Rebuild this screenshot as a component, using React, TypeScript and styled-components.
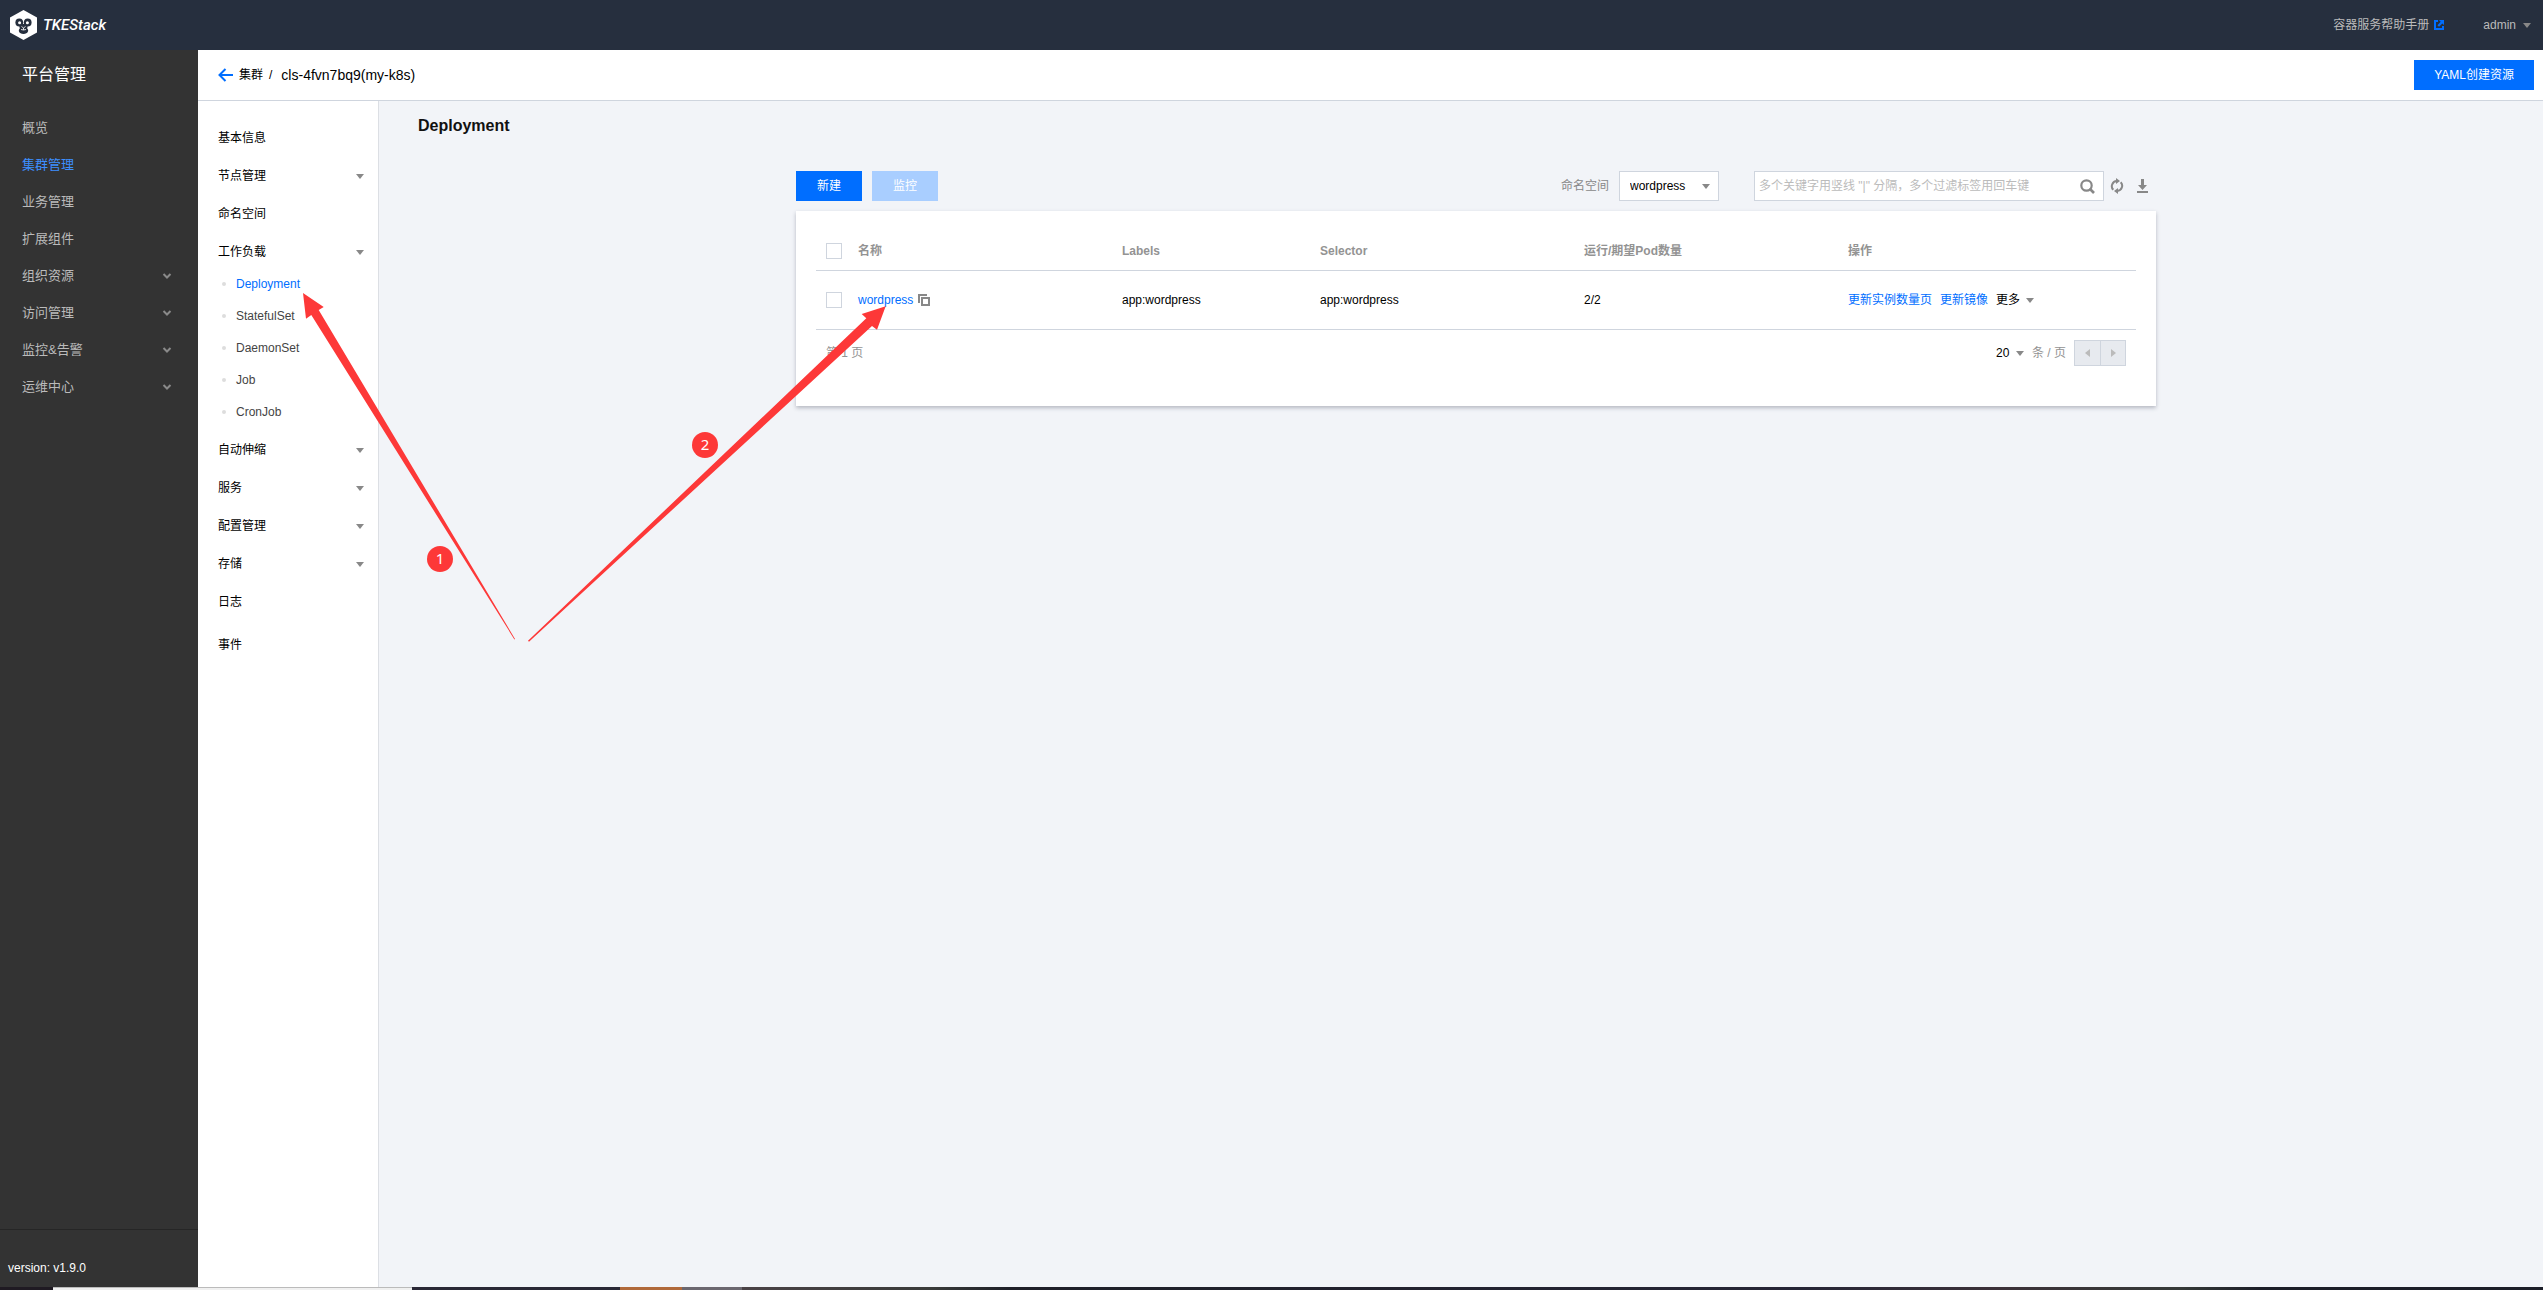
import React from 'react';
import styled, { createGlobalStyle } from 'styled-components';

const blue = '#006eff';
const line = '#cfd5de';
const muted = '#888';
const label = '#939393';

const GlobalStyle = createGlobalStyle`
  *, *::before, *::after { box-sizing: border-box; }
  body {
    margin: 0;
    color: #000;
    background: #f2f4f8;
    font-family: "Liberation Sans", "Noto Sans CJK SC", sans-serif;
    font-size: 12px;
    line-height: 18px;
  }
  button, input, select { font: inherit; color: inherit; border: 0; border-radius: 0; padding: 0; margin: 0; background: none; }
  button { cursor: pointer; }
  a { color: inherit; text-decoration: none; }
  ul { list-style: none; margin: 0; padding: 0; }
  h1, h2 { margin: 0; }
  svg { display: block; flex: none; }
`;

const Page = styled.div`
  position: relative;
  display: grid;
  grid-template-rows: 50px 1fr 3px;
  min-height: 100vh;
`;

const TopBar = styled.header`
  display: flex;
  align-items: center;
  justify-content: space-between;
  padding: 0 12px 0 10px;
  background: #262f3e;
  color: #bbb;
`;

const Brand = styled.a`
  display: flex;
  align-items: center;
  gap: 6px;
  color: #fff;
  font-family: Roboto, sans-serif;
  font-size: 15px;
  font-style: italic;
  font-weight: 500;
`;

const TopLinks = styled.nav`
  display: flex;
  align-items: center;
  gap: 39px;
`;

const TopLink = styled.a`
  display: flex;
  align-items: center;
  gap: 5px;
`;

const UserButton = styled.button`
  display: flex;
  align-items: center;
  gap: 7px;
`;

const Body = styled.div`
  display: grid;
  grid-template-columns: 198px 1fr;
`;

const Sidebar = styled.aside`
  display: flex;
  flex-direction: column;
  background: #333;
  color: #bbb;
`;

const SideTitle = styled.h2`
  padding: 13px 22px 22px;
  font-size: 16px;
  line-height: 24px;
  font-weight: 400;
  color: #fff;
`;

const SideList = styled.ul`
  flex: 1;
`;

const SideLink = styled.a<{ $active?: boolean }>`
  display: flex;
  align-items: center;
  justify-content: space-between;
  height: 37px;
  padding: 0 26px 0 22px;
  font-size: 13px;
  color: ${(p) => (p.$active ? '#3d8fff' : 'inherit')};
`;

const Version = styled.footer`
  height: 58px;
  padding: 29px 8px 0;
  border-top: 1px solid #262626;
  color: #fff;
`;

const Workspace = styled.div`
  display: grid;
  grid-template-rows: 51px 1fr;
`;

const CrumbBar = styled.div`
  display: flex;
  align-items: center;
  justify-content: space-between;
  padding: 0 9px 0 20px;
  background: #fff;
  border-bottom: 1px solid ${line};
`;

const Crumbs = styled.nav`
  display: flex;
  align-items: center;
  gap: 6px;
`;

const CrumbCurrent = styled.span`
  padding-left: 3px;
  font-size: 14px;
`;

const Button = styled.button`
  height: 30px;
  padding: 0 20px;
  min-width: 66px;
  background: ${blue};
  color: #fff;
  &:disabled { background: #a9ceff; cursor: default; }
`;

const Columns = styled.div`
  display: grid;
  grid-template-columns: 181px 1fr;
`;

const SubNav = styled.nav`
  padding-top: 18px;
  background: #fff;
  border-right: 1px solid #dcdfe4;
`;

const SubLink = styled.a`
  display: flex;
  align-items: center;
  justify-content: space-between;
  height: 38px;
  padding: 0 14px 0 20px;
`;

const SubGroup = styled.li<{ $spaced?: boolean }>`
  padding-top: ${(p) => (p.$spaced ? '5px' : '0')};
`;

const SubItem = styled.a<{ $active?: boolean }>`
  display: flex;
  align-items: center;
  gap: 10px;
  height: 32px;
  padding: 0 24px 7px;
  color: ${(p) => (p.$active ? blue : '#444')};
  &::before {
    content: '';
    width: 4px;
    height: 4px;
    border-radius: 2px;
    background: #ddd;
  }
`;

const Main = styled.main`
  padding: 15px 0 60px 30px;
`;

const PageTitle = styled.h1`
  padding-left: 9px;
  font-size: 16px;
  line-height: 20px;
  color: #111;
`;

const Panel = styled.section`
  max-width: 1360px;
  margin: 35px auto 0;
`;

const Toolbar = styled.div`
  display: flex;
  align-items: center;
  justify-content: space-between;
`;

const ButtonGroup = styled.div`
  display: flex;
  gap: 10px;
`;

const Filters = styled.div`
  display: flex;
  align-items: center;
  padding-right: 8px;
`;

const FilterLabel = styled.label`
  margin-right: 10px;
  color: ${muted};
`;

const SelectBox = styled.span`
  display: grid;
  align-items: center;
  width: 100px;
  height: 30px;
  margin-right: 35px;
  border: 1px solid ${line};
  background: #fff;
  > * { grid-area: 1 / 1; }
  > select { appearance: none; width: 100%; height: 28px; padding: 0 10px; }
  > svg { justify-self: end; margin-right: 8px; pointer-events: none; }
`;

const SearchBox = styled.div`
  display: flex;
  align-items: center;
  width: 350px;
  height: 30px;
  margin-right: 6px;
  padding: 0 8px 0 4px;
  border: 1px solid ${line};
  background: #fff;
  > input { flex: 1; min-width: 0; height: 28px; outline: 0; }
  > input::placeholder { color: #bbb; opacity: 1; }
`;

const IconButton = styled.button`
  display: flex;
  & + & { margin-left: 12px; }
`;

const Card = styled.div`
  margin-top: 10px;
  padding: 20px 20px 40px;
  background: #fff;
  box-shadow: 0 2px 4px rgba(54, 58, 80, 0.32);
`;

const Table = styled.table`
  width: 100%;
  table-layout: fixed;
  border-collapse: separate;
  border-spacing: 0;
  text-align: left;
  th, td { padding: 0 10px; border-bottom: 1px solid ${line}; }
  th { height: 40px; color: ${label}; }
  td { height: 59px; }
`;

const Checkbox = styled.input`
  display: block;
  appearance: none;
  width: 16px;
  height: 16px;
  border: 1px solid ${line};
  background: #fff;
  &:checked { background: ${blue}; }
`;

const NameCell = styled.div`
  display: flex;
  align-items: center;
  gap: 5px;
`;

const TextLink = styled.a`
  color: ${blue};
`;

const Actions = styled.div`
  display: flex;
  align-items: center;
  gap: 8px;
`;

const MoreButton = styled.button`
  display: flex;
  align-items: center;
  gap: 6px;
`;

const Pager = styled.div`
  display: flex;
  align-items: center;
  justify-content: space-between;
  padding: 10px 10px 0;
  color: ${label};
`;

const PageSize = styled.div`
  display: flex;
  align-items: center;
`;

const SizeSelect = styled.span`
  display: grid;
  align-items: center;
  width: 28px;
  margin-right: 8px;
  color: #000;
  > * { grid-area: 1 / 1; }
  > select { appearance: none; width: 100%; }
  > svg { justify-self: end; pointer-events: none; }
`;

const PageButtons = styled.div`
  display: flex;
  margin-left: 8px;
  border: 1px solid ${line};
`;

const PageButton = styled.button`
  display: flex;
  align-items: center;
  justify-content: center;
  width: 25px;
  height: 24px;
  background: #e7eaef;
  color: #bbb;
  & + & { border-left: 1px solid ${line}; }
`;

const TaskBar = styled.div`
  display: flex;
  background: linear-gradient(90deg, #4a4246 740px, #3a3b3a 930px, #1e1f28 1010px, #262536 1800px, #3c3139 2000px, #363a38 2180px, #1c1e28 2260px);
`;

const TaskSlice = styled.div<{ $width: number; $color: string; $edge?: boolean }>`
  width: ${(p) => p.$width}px;
  background: ${(p) => p.$color};
  border-top: ${(p) => (p.$edge ? '1px solid #bbb' : '0')};
`;

const Overlay = styled.div`
  position: absolute;
  inset: 0;
  pointer-events: none;
  overflow: hidden;
`;

const Step = styled.span<{ $x: number; $y: number }>`
  position: absolute;
  left: ${(p) => p.$x}px;
  top: ${(p) => p.$y}px;
  width: 26px;
  height: 26px;
  border-radius: 13px;
  background: #fd3838;
  color: #fff;
  font-family: "Noto Sans", sans-serif;
  font-size: 15px;
  line-height: 24px;
  text-align: center;
`;

const Caret = ({ color = '#888' }: { color?: string }) => (
  <svg width="8" height="5" viewBox="0 0 8 5" aria-hidden="true">
    <path d="M0 0h8L4 5z" fill={color} />
  </svg>
);

const Chevron = () => (
  <svg width="10" height="8" viewBox="0 0 10 8" aria-hidden="true">
    <path d="M1.500 2L5 5.500 8.500 2" fill="none" stroke="#8a8a8a" strokeWidth="2" />
  </svg>
);

const Logo = () => (
  <svg width="27" height="30" viewBox="0 0 27 30" aria-hidden="true">
    <path d="M13.500 0L27 7.500v15L13.500 30 0 22.500v-15z" fill="#fff" />
    <g fill="#262f3e">
      <circle cx="9.300" cy="12.500" r="3.900" />
      <circle cx="17.700" cy="12.500" r="3.900" />
      <path d="M9 14h9l-.800 4.500c2 1.500 1 5.500-3.700 5.500s-5.700-4-3.700-5.500z" />
    </g>
    <g fill="#fff">
      <circle cx="9.600" cy="12.800" r="1.500" />
      <circle cx="17.400" cy="12.800" r="1.500" />
      <path d="M12.300 9h2.400l-1.200 2.500z" />
    </g>
    <path d="M11.500 16.500l2 1.500 2-1.500M13.500 18v2M11 19.500l2.500.500 2.500-.500" fill="none" stroke="#fff" strokeWidth=".8" />
  </svg>
);

const platformMenu = [
  { label: '概览' },
  { label: '集群管理', active: true },
  { label: '业务管理' },
  { label: '扩展组件' },
  { label: '组织资源', open: true },
  { label: '访问管理', open: true },
  { label: '监控&告警', open: true },
  { label: '运维中心', open: true },
];

const clusterMenu: { label: string; group?: boolean; items?: string[]; spaced?: boolean }[] = [
  { label: '基本信息' },
  { label: '节点管理', group: true },
  { label: '命名空间' },
  { label: '工作负载', group: true, items: ['Deployment', 'StatefulSet', 'DaemonSet', 'Job', 'CronJob'] },
  { label: '自动伸缩', group: true },
  { label: '服务', group: true },
  { label: '配置管理', group: true },
  { label: '存储', group: true },
  { label: '日志' },
  { label: '事件', spaced: true },
];

const deployments = [{ name: 'wordpress', labels: 'app:wordpress', selector: 'app:wordpress', pods: '2/2' }];

export default function App() {
  return (
    <Page>
      <GlobalStyle />
      <TopBar>
        <Brand href="#">
          <Logo />
          TKEStack
        </Brand>
        <TopLinks>
          <TopLink href="#">
            容器服务帮助手册
            <svg width="10" height="10" viewBox="0 0 10 10" aria-hidden="true">
              <path d="M4 1H1v8h8V6" fill="none" stroke={blue} strokeWidth="2" />
              <path d="M5 0h5v5L8.300 3.400 5 6.700 3.500 5.200 6.700 1.800z" fill={blue} />
            </svg>
          </TopLink>
          <UserButton type="button">
            admin
            <Caret />
          </UserButton>
        </TopLinks>
      </TopBar>

      <Body>
        <Sidebar>
          <SideTitle>平台管理</SideTitle>
          <SideList>
            {platformMenu.map((m) => (
              <li key={m.label}>
                <SideLink href="#" $active={m.active}>
                  {m.label}
                  {m.open && <Chevron />}
                </SideLink>
              </li>
            ))}
          </SideList>
          <Version>version: v1.9.0</Version>
        </Sidebar>

        <Workspace>
          <CrumbBar>
            <Crumbs>
              <svg width="15" height="14" viewBox="0 0 15 14" aria-hidden="true">
                <path d="M7.500 1L1.500 7l6 6M2 7h13" fill="none" stroke={blue} strokeWidth="2" />
              </svg>
              <a href="#">集群</a>
              <span>/</span>
              <CrumbCurrent>cls-4fvn7bq9(my-k8s)</CrumbCurrent>
            </Crumbs>
            <Button type="button">YAML创建资源</Button>
          </CrumbBar>

          <Columns>
            <SubNav>
              <ul>
                {clusterMenu.map((m) => (
                  <SubGroup key={m.label} $spaced={m.spaced}>
                    <SubLink href="#">
                      {m.label}
                      {m.group && <Caret />}
                    </SubLink>
                    {m.items && (
                      <ul>
                        {m.items.map((item, i) => (
                          <li key={item}>
                            <SubItem href="#" $active={i === 0}>{item}</SubItem>
                          </li>
                        ))}
                      </ul>
                    )}
                  </SubGroup>
                ))}
              </ul>
            </SubNav>

            <Main>
              <PageTitle>Deployment</PageTitle>
              <Panel>
                <Toolbar>
                  <ButtonGroup>
                    <Button type="button">新建</Button>
                    <Button type="button" disabled>监控</Button>
                  </ButtonGroup>
                  <Filters>
                    <FilterLabel htmlFor="namespace">命名空间</FilterLabel>
                    <SelectBox>
                      <select id="namespace" defaultValue="wordpress">
                        <option>wordpress</option>
                      </select>
                      <Caret />
                    </SelectBox>
                    <SearchBox>
                      <input type="text" aria-label="搜索" placeholder={'多个关键字用竖线 "|" 分隔，多个过滤标签用回车键'} />
                      <IconButton type="button" aria-label="搜索">
                        <svg width="15" height="15" viewBox="0 0 15 15" aria-hidden="true">
                          <circle cx="6.500" cy="6.500" r="5.200" fill="none" stroke={muted} strokeWidth="2.200" />
                          <path d="M9.500 9.500l4.500 4.500" stroke={muted} strokeWidth="2.600" />
                        </svg>
                      </IconButton>
                    </SearchBox>
                    <IconButton type="button" aria-label="刷新">
                      <svg width="14" height="16" viewBox="0 0 14 16" aria-hidden="true">
                        <g fill="none" stroke={muted} strokeWidth="2">
                          <path d="M3.300 11.800A5.200 5.200 0 0 1 6.800 3" />
                          <path d="M10.700 4.200A5.200 5.200 0 0 1 7.200 13" />
                        </g>
                        <path d="M6 0l4 3-4 3zM8 10v6l-4-3z" fill={muted} />
                      </svg>
                    </IconButton>
                    <IconButton type="button" aria-label="下载">
                      <svg width="12" height="14" viewBox="0 0 12 14" aria-hidden="true">
                        <path d="M5 0h3v6h3l-4.500 5L2 6h3zM1 12h11v2H1z" fill={muted} />
                      </svg>
                    </IconButton>
                  </Filters>
                </Toolbar>

                <Card>
                  <Table>
                    <colgroup>
                      <col width="32" />
                      <col width="20%" />
                      <col width="15%" />
                      <col width="20%" />
                      <col width="20%" />
                      <col />
                    </colgroup>
                    <thead>
                      <tr>
                        <th><Checkbox type="checkbox" aria-label="全选" /></th>
                        <th>名称</th>
                        <th>Labels</th>
                        <th>Selector</th>
                        <th>运行/期望Pod数量</th>
                        <th>操作</th>
                      </tr>
                    </thead>
                    <tbody>
                      {deployments.map((d) => (
                        <tr key={d.name}>
                          <td><Checkbox type="checkbox" aria-label={d.name} /></td>
                          <td>
                            <NameCell>
                              <TextLink href="#">{d.name}</TextLink>
                              <IconButton type="button" aria-label="复制">
                                <svg width="12" height="12" viewBox="0 0 12 12" aria-hidden="true">
                                  <path d="M1 9V1h8M4 4h7v7H4z" fill="none" stroke={muted} strokeWidth="2" />
                                </svg>
                              </IconButton>
                            </NameCell>
                          </td>
                          <td>{d.labels}</td>
                          <td>{d.selector}</td>
                          <td>{d.pods}</td>
                          <td>
                            <Actions>
                              <TextLink href="#">更新实例数量页</TextLink>
                              <TextLink href="#">更新镜像</TextLink>
                              <MoreButton type="button">
                                更多
                                <Caret />
                              </MoreButton>
                            </Actions>
                          </td>
                        </tr>
                      ))}
                    </tbody>
                  </Table>
                  <Pager>
                    <span>第 1 页</span>
                    <PageSize>
                      <SizeSelect>
                        <select id="page-size" aria-label="条 / 页" defaultValue="20">
                          <option>20</option>
                        </select>
                        <Caret />
                      </SizeSelect>
                      <label htmlFor="page-size">条 / 页</label>
                      <PageButtons>
                        <PageButton type="button" aria-label="上一页">
                          <svg width="5" height="8" viewBox="0 0 5 8"><path d="M5 0v8L0 4z" fill="currentColor" /></svg>
                        </PageButton>
                        <PageButton type="button" aria-label="下一页">
                          <svg width="5" height="8" viewBox="0 0 5 8"><path d="M0 0v8l5-4z" fill="currentColor" /></svg>
                        </PageButton>
                      </PageButtons>
                    </PageSize>
                  </Pager>
                </Card>
              </Panel>
            </Main>
          </Columns>
        </Workspace>
      </Body>

      <TaskBar>
        <TaskSlice $width={53} $color="#1f1a22" />
        <TaskSlice $width={359} $color="#f0f0f0" $edge />
        <TaskSlice $width={208} $color="#2a2836" />
        <TaskSlice $width={62} $color="#b0693a" />
        <TaskSlice $width={60} $color="#6b676f" />
      </TaskBar>

      <Overlay>
        <svg width="900" height="660" viewBox="0 0 900 660" aria-hidden="true">
          <g fill="#fd3838">
            <path d="M303 293l20.700 14-5 3L515 639l-.600.400L311.300 315l-5.300 3.700z" />
            <path d="M885.700 306.300L877 329.700l-5-3.700-343 315.700-1-1L866.300 318.300l-4.600-4.300z" />
          </g>
        </svg>
        <Step $x={427} $y={546}>1</Step>
        <Step $x={692} $y={432}>2</Step>
      </Overlay>
    </Page>
  );
}
